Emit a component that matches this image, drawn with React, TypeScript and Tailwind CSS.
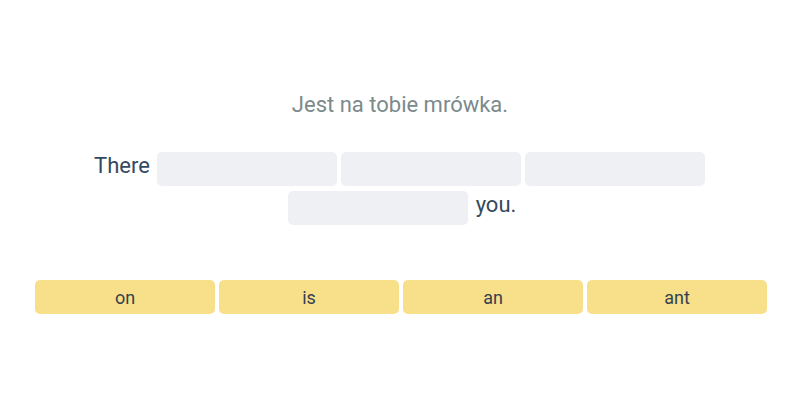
import React from "react";

export default function App() {
  const words = ["on", "is", "an", "ant"];
  return (
    <div className="w-[800px] h-[400px] bg-white flex flex-col items-center" style={{ fontFamily: "Roboto, 'Liberation Sans', sans-serif" }}>
      <div className="mt-[91px] text-[22px] leading-[28px] text-[#7b8a8b]">Jest na tobie mrówka.</div>
      <div className="mt-[33px] w-[730px] flex flex-wrap justify-center items-center gap-x-1 gap-y-[5px] text-[22px] text-[#34495e]">
        <span className="mx-[3px] leading-[28px] -translate-y-[3px]">There</span>
        <div className="w-[180px] h-[34px] rounded-[5px] bg-[#eff0f4]" />
        <div className="w-[180px] h-[34px] rounded-[5px] bg-[#eff0f4]" />
        <div className="w-[180px] h-[34px] rounded-[5px] bg-[#eff0f4] mr-[4px]" />
        <div className="w-[180px] h-[34px] rounded-[5px] bg-[#eff0f4] ml-[7px]" />
        <span className="ml-[4px] mr-[3px] leading-[28px] -translate-y-[3px]">you.</span>
      </div>
      <div className="mt-[55px] pl-[2px] flex gap-1">
        {words.map((w) => (
          <div key={w} className="w-[180px] h-[34px] rounded-[5px] bg-[#f8e08a] flex items-center justify-center text-[18px] text-[#34404e]">
            {w}
          </div>
        ))}
      </div>
    </div>
  );
}
